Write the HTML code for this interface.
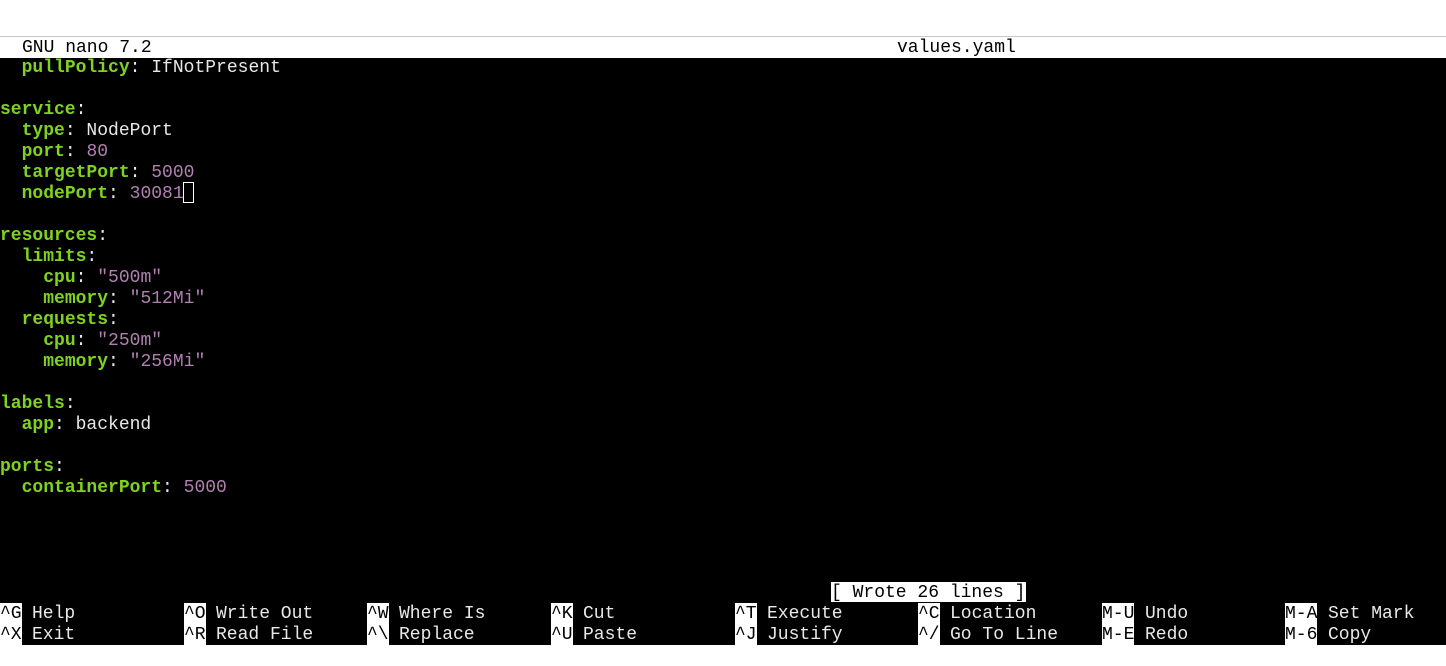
<!DOCTYPE html>
<html><head><meta charset="utf-8"><style>
body{margin:0;width:1446px;height:666px;background:#fff;position:relative;overflow:hidden;font-family:"Liberation Mono",monospace;font-size:18px;}
.hl{position:absolute;left:0;top:36px;width:1446px;height:1px;background:#c8c8c8}
.hdr{position:absolute;left:0;top:37px;width:1446px;height:21px;background:#fff;color:#000}
.term{position:absolute;left:0;top:58px;width:1446px;height:587px;background:#000}
.l{position:absolute;left:0;height:21px;line-height:21px;white-space:pre;color:#e8e8e8;top:1px}
.k{color:#7ed321;font-weight:bold}
.n{color:#b080b0}
.t{position:absolute;white-space:pre;line-height:21px;height:21px}
.sc{background:#fff;color:#000}
.cur{position:absolute;width:9px;height:19px;border:1px solid #fff;top:0px}
</style></head><body>
<div class="hl"></div>
<div class="hdr"><span class="t" style="left:22px;top:1px">GNU nano 7.2</span><span class="t" style="left:897px;top:1px">values.yaml</span></div>
<div class="term">
<div class="l" style="top:0px">  <span class="k">pullPolicy</span>: IfNotPresent</div>
<div class="l" style="top:42px"><span class="k">service</span>:</div>
<div class="l" style="top:63px">  <span class="k">type</span>: NodePort</div>
<div class="l" style="top:84px">  <span class="k">port</span>: <span class="n">80</span></div>
<div class="l" style="top:105px">  <span class="k">targetPort</span>: <span class="n">5000</span></div>
<div class="l" style="top:126px">  <span class="k">nodePort</span>: <span class="n">30081</span></div>
<div class="cur" style="left:183px;top:124px"></div>
<div class="l" style="top:168px"><span class="k">resources</span>:</div>
<div class="l" style="top:189px">  <span class="k">limits</span>:</div>
<div class="l" style="top:210px">    <span class="k">cpu</span>: <span class="n">"500m"</span></div>
<div class="l" style="top:231px">    <span class="k">memory</span>: <span class="n">"512Mi"</span></div>
<div class="l" style="top:252px">  <span class="k">requests</span>:</div>
<div class="l" style="top:273px">    <span class="k">cpu</span>: <span class="n">"250m"</span></div>
<div class="l" style="top:294px">    <span class="k">memory</span>: <span class="n">"256Mi"</span></div>
<div class="l" style="top:336px"><span class="k">labels</span>:</div>
<div class="l" style="top:357px">  <span class="k">app</span>: backend</div>
<div class="l" style="top:399px"><span class="k">ports</span>:</div>
<div class="l" style="top:420px">  <span class="k">containerPort</span>: <span class="n">5000</span></div>
<div class="t sc" style="left:831px;top:524px;width:195px;height:20px;line-height:22px">[ Wrote 26 lines ]</div>
</div>
<div style="position:absolute;left:0;top:603px;width:1446px;height:42px;color:#e8e8e8">
<span class="t sc" style="left:0;top:0;line-height:22px">^G</span><span class="t" style="left:32px;top:1px">Help</span>
<span class="t sc" style="left:0;top:21px;line-height:22px">^X</span><span class="t" style="left:32px;top:22px">Exit</span>
<span class="t sc" style="left:184px;top:0;line-height:22px">^O</span><span class="t" style="left:216px;top:1px">Write Out</span>
<span class="t sc" style="left:184px;top:21px;line-height:22px">^R</span><span class="t" style="left:216px;top:22px">Read File</span>
<span class="t sc" style="left:367px;top:0;line-height:22px">^W</span><span class="t" style="left:399px;top:1px">Where Is</span>
<span class="t sc" style="left:367px;top:21px;line-height:22px">^\</span><span class="t" style="left:399px;top:22px">Replace</span>
<span class="t sc" style="left:551px;top:0;line-height:22px">^K</span><span class="t" style="left:583px;top:1px">Cut</span>
<span class="t sc" style="left:551px;top:21px;line-height:22px">^U</span><span class="t" style="left:583px;top:22px">Paste</span>
<span class="t sc" style="left:735px;top:0;line-height:22px">^T</span><span class="t" style="left:767px;top:1px">Execute</span>
<span class="t sc" style="left:735px;top:21px;line-height:22px">^J</span><span class="t" style="left:767px;top:22px">Justify</span>
<span class="t sc" style="left:918px;top:0;line-height:22px">^C</span><span class="t" style="left:950px;top:1px">Location</span>
<span class="t sc" style="left:918px;top:21px;line-height:22px">^/</span><span class="t" style="left:950px;top:22px">Go To Line</span>
<span class="t sc" style="left:1102px;top:0;line-height:22px">M-U</span><span class="t" style="left:1145px;top:1px">Undo</span>
<span class="t sc" style="left:1102px;top:21px;line-height:22px">M-E</span><span class="t" style="left:1145px;top:22px">Redo</span>
<span class="t sc" style="left:1285px;top:0;line-height:22px">M-A</span><span class="t" style="left:1328px;top:1px">Set Mark</span>
<span class="t sc" style="left:1285px;top:21px;line-height:22px">M-6</span><span class="t" style="left:1328px;top:22px">Copy</span>
</div>
</body></html>
